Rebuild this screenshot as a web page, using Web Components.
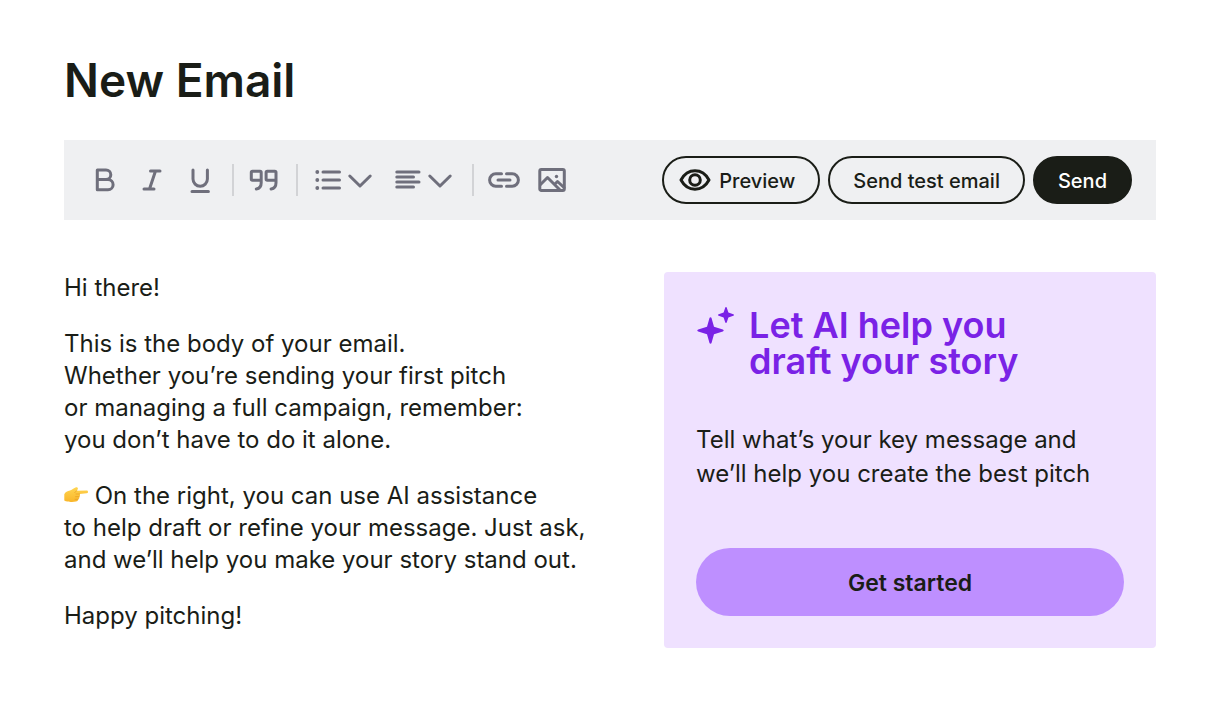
<!DOCTYPE html>
<html lang="en">
<head>
<meta charset="utf-8">
<meta name="viewport" content="width=device-width, initial-scale=1">
<title>New Email</title>
<style>
body { margin: 0; background: #fff; color: #1a1d17; font-family: Inter, "Liberation Sans", sans-serif; }
</style>
</head>
<body>
<email-page></email-page>

<template id="t-page">
<style>
:host { display: block; padding: 50px 64px 64px; }
h1 { margin: 0 0 30px; font-size: 46px; line-height: 60px; font-weight: 600; }
main { display: grid; grid-template-columns: minmax(0, 11fr) minmax(0, 10fr); column-gap: 59px; align-items: start; margin-top: 52px; }
</style>
<h1>New Email</h1>
<editor-toolbar></editor-toolbar>
<main>
<email-body>
<p>Hi there!</p>
<p>This is the body of your email.<br>Whether you’re sending your first pitch<br>or managing a full campaign, remember:<br>you don’t have to do it alone.</p>
<p><point-right></point-right> On the right, you can use AI assistance<br>to help draft or refine your message. Just ask,<br>and we’ll help you make your story stand out.</p>
<p>Happy pitching!</p>
</email-body>
<ai-card>
<span slot="title">Let AI help you<br>draft your story</span>
<span slot="text">Tell what’s your key message and<br>we’ll help you create the best pitch</span>
<span slot="action">Get started</span>
</ai-card>
</main>
</template>

<template id="t-toolbar">
<style>
:host { display: flex; align-items: center; justify-content: space-between; min-height: 80px; padding: 0 24px; box-sizing: border-box; background: #eff0f2; }
div { display: flex; align-items: center; }
.tools { gap: 16px; }
.actions { gap: 8px; }
hr { width: 2px; height: 32px; margin: 0 -2px 0 0; border: 0; background: #d2d3d6; }
</style>
<div class="tools" role="toolbar" aria-label="Formatting">
<tool-button icon="bold" label="Bold"></tool-button>
<tool-button icon="italic" label="Italic"></tool-button>
<tool-button icon="underline" label="Underline"></tool-button>
<hr>
<tool-button icon="quote" label="Quote"></tool-button>
<hr>
<tool-button icon="list" label="List style" menu></tool-button>
<tool-button icon="align" label="Alignment" menu></tool-button>
<hr>
<tool-button icon="link" label="Link"></tool-button>
<tool-button icon="image" label="Image"></tool-button>
</div>
<div class="actions">
<pill-button><svg slot="icon" width="32" height="32" viewBox="0 0 32 32" fill="none" stroke="currentColor" stroke-width="3" aria-hidden="true"><path d="M2 16C5.500 9.500 10.500 6.800 16 6.800S26.500 9.500 30 16C26.500 22.500 21.500 25.200 16 25.200S5.500 22.500 2 16Z" stroke-linejoin="round"/><circle cx="16" cy="16" r="5.300"/></svg>Preview</pill-button>
<pill-button>Send test email</pill-button>
<pill-button primary>Send</pill-button>
</div>
</template>

<template id="t-pill">
<style>
:host { display: block; }
button { display: flex; align-items: center; gap: 8px; height: 48px; padding: 0 23px; border: 2px solid #1a1d17; border-radius: 24px; background: transparent; color: #1a1d17; font: 500 20px/24px Inter, "Liberation Sans", sans-serif; white-space: nowrap; cursor: pointer; }
:host([primary]) button { background: #1a1d17; color: #fff; }
span { padding-top: 2px; }
::slotted(svg) { display: block; margin-left: -8px; }
</style>
<button type="button"><slot name="icon"></slot><span><slot></slot></span></button>
</template>

<template id="t-body">
<style>
:host { display: flex; flex-direction: column; gap: 24px; font-size: 24px; line-height: 32px; white-space: nowrap; }
::slotted(p) { margin: 0; }
</style>
<slot></slot>
</template>

<template id="t-point">
<style>
:host { display: inline-block; width: 24px; height: 20px; vertical-align: -2px; }
svg { display: block; }
</style>
<svg width="24" height="20" viewBox="0 0 24 20" role="img" aria-label="👉">
<defs><linearGradient id="skin" x1="0" y1="0" x2="0" y2="1"><stop offset="0" stop-color="#ffd551"/><stop offset="1" stop-color="#f9b62a"/></linearGradient></defs>
<path d="M.3 8.200C1.200 6.200 3.500 5.400 6 4.600C8.500 3.800 10 1.800 12 1.200C13.800.9 14.300 2.300 13.600 3.400L12.600 4.700L22.600 4.600C24.500 4.700 24.500 7.100 22.600 7.300L15.600 8C16.400 9 16 10.300 15.200 10.700C15.600 11.900 15 13 14.100 13.300C14 14.700 13.200 15.500 12 15.600C9 16.200 5.500 16 3.600 15.500C2.300 15.200 1.200 15 .3 14.400Z" fill="url(#skin)"/>
<path d="M15.600 8H12M15.200 10.700H11.500M14.100 13.300H11M12.600 4.700L10.800 6.600" fill="none" stroke="#e79b20" stroke-width=".7" stroke-linecap="round"/>
</svg>
</template>

<template id="t-card">
<style>
:host { display: block; padding: 35px 32px 32px; border-radius: 4px; background: #efe1ff; }
header { display: flex; gap: 13px; color: #7a22e6; }
svg { flex: none; display: block; margin-top: -1px; }
h2 { margin: 0; font-size: 36px; line-height: 36px; font-weight: 600; white-space: nowrap; }
p { margin: 44px 0 57px; font-size: 24px; line-height: 34px; white-space: nowrap; }
button { display: block; width: 100%; height: 68px; padding: 2px 0 0; border: 0; border-radius: 34px; background: #be8fff; color: #1a1d17; font: 600 23px/28px Inter, "Liberation Sans", sans-serif; cursor: pointer; }
</style>
<header>
<svg width="40" height="40" viewBox="0 0 40 40" fill="currentColor" aria-hidden="true"><path d="M14.500 11.300C15 11.300 15.300 11.600 15.500 12.100L18 20.800L26.800 23.500C28 23.900 28 25.100 26.800 25.500L18 28.200L15.500 36.900C15.200 38 13.800 38 13.500 36.900L11 28.200L2.200 25.500C1 25.100 1 23.900 2.200 23.500L11 20.800L13.500 12.100C13.700 11.600 14 11.300 14.500 11.300Z"/><path d="M30 1C30.500 1 30.700 1.300 30.800 1.700L32.400 6.600L37.300 8.200C38.200 8.500 38.200 9.500 37.300 9.800L32.400 11.400L30.800 16.300C30.600 17.200 29.400 17.200 29.200 16.300L27.600 11.400L22.700 9.800C21.800 9.500 21.800 8.500 22.700 8.200L27.600 6.600L29.200 1.700C29.300 1.300 29.500 1 30 1Z"/></svg>
<h2><slot name="title"></slot></h2>
</header>
<p><slot name="text"></slot></p>
<button type="button"><slot name="action"></slot></button>
</template>

<script>
const fromTemplate = (name, id) => customElements.define(name, class extends HTMLElement {
  constructor() {
    super();
    this.attachShadow({ mode: 'open' }).append(document.getElementById(id).content.cloneNode(true));
  }
});

const ICONS = {
  bold: '<path d="M9.300 6H18A4.800 4.800 0 0 1 18 15.600H9.300ZM9.300 15.600H20A5.100 5.100 0 0 1 20 25.800H9.300Z"/>',
  italic: '<path d="M14.500 7H24M8 25H18M19.500 7L13.500 25"/>',
  underline: '<path d="M9 6V15A7.200 7.200 0 0 0 23.400 15V6M8 27.500H24.400"/>',
  quote: '<path d="M13.200 16.200H4.500Q3.300 16.200 3.300 15V8.500Q3.300 7.300 4.500 7.300H12Q13.200 7.300 13.200 8.500V18.700Q13.200 24.200 8.300 25M28 16.200H19.300Q18.100 16.200 18.100 15V8.500Q18.100 7.300 19.300 7.300H26.800Q28 7.300 28 8.500V18.700Q28 24.200 23.100 25"/>',
  list: '<path d="M11 8H27.500M11 16H27.500M11 24H27.500"/><g fill="currentColor" stroke="none"><circle cx="5.300" cy="8" r="1.900"/><circle cx="5.300" cy="16" r="1.900"/><circle cx="5.300" cy="24" r="1.900"/></g>',
  align: '<path d="M4.800 8H27M4.800 13H21.500M4.800 18H27M4.800 23H21.500"/>',
  link: '<path d="M13.500 9.800H7.800A6.200 6.200 0 0 0 7.800 22.200H13.500M18.500 9.800H24.200A6.200 6.200 0 0 1 24.200 22.200H18.500M10 16H22"/>',
  image: '<rect x="3.800" y="5.500" width="24.500" height="21" rx="1.500"/><path d="M4.500 20.500L11.500 13.500L24 26M18.500 20.500L21.500 17.500L28 23.500"/><circle cx="20.500" cy="12.500" r="1.700" fill="currentColor" stroke="none"/>'
};

class ToolButton extends HTMLElement {
  constructor() {
    super();
    this.attachShadow({ mode: 'open' });
  }
  connectedCallback() {
    const menu = this.hasAttribute('menu');
    this.shadowRoot.innerHTML = `<style>
:host { display: block; }
button { display: flex; height: 32px; padding: 0; border: 0; background: none; color: #6f6f7c; cursor: pointer; }
svg { display: block; fill: none; stroke: currentColor; stroke-width: 3; stroke-linecap: round; stroke-linejoin: round; }
</style>
<button type="button" aria-label="${this.getAttribute('label')}"${menu ? ' aria-haspopup="menu"' : ''}>
<svg width="32" height="32" viewBox="0 0 32 32">${ICONS[this.getAttribute('icon')]}</svg>${menu ? '<svg width="32" height="32" viewBox="0 0 32 32"><path d="M5.800 12L16 22L26.200 12"/></svg>' : ''}
</button>`;
  }
}
customElements.define('tool-button', ToolButton);
fromTemplate('pill-button', 't-pill');
fromTemplate('editor-toolbar', 't-toolbar');
fromTemplate('point-right', 't-point');
fromTemplate('email-body', 't-body');
fromTemplate('ai-card', 't-card');
fromTemplate('email-page', 't-page');
</script>
</body>
</html>
